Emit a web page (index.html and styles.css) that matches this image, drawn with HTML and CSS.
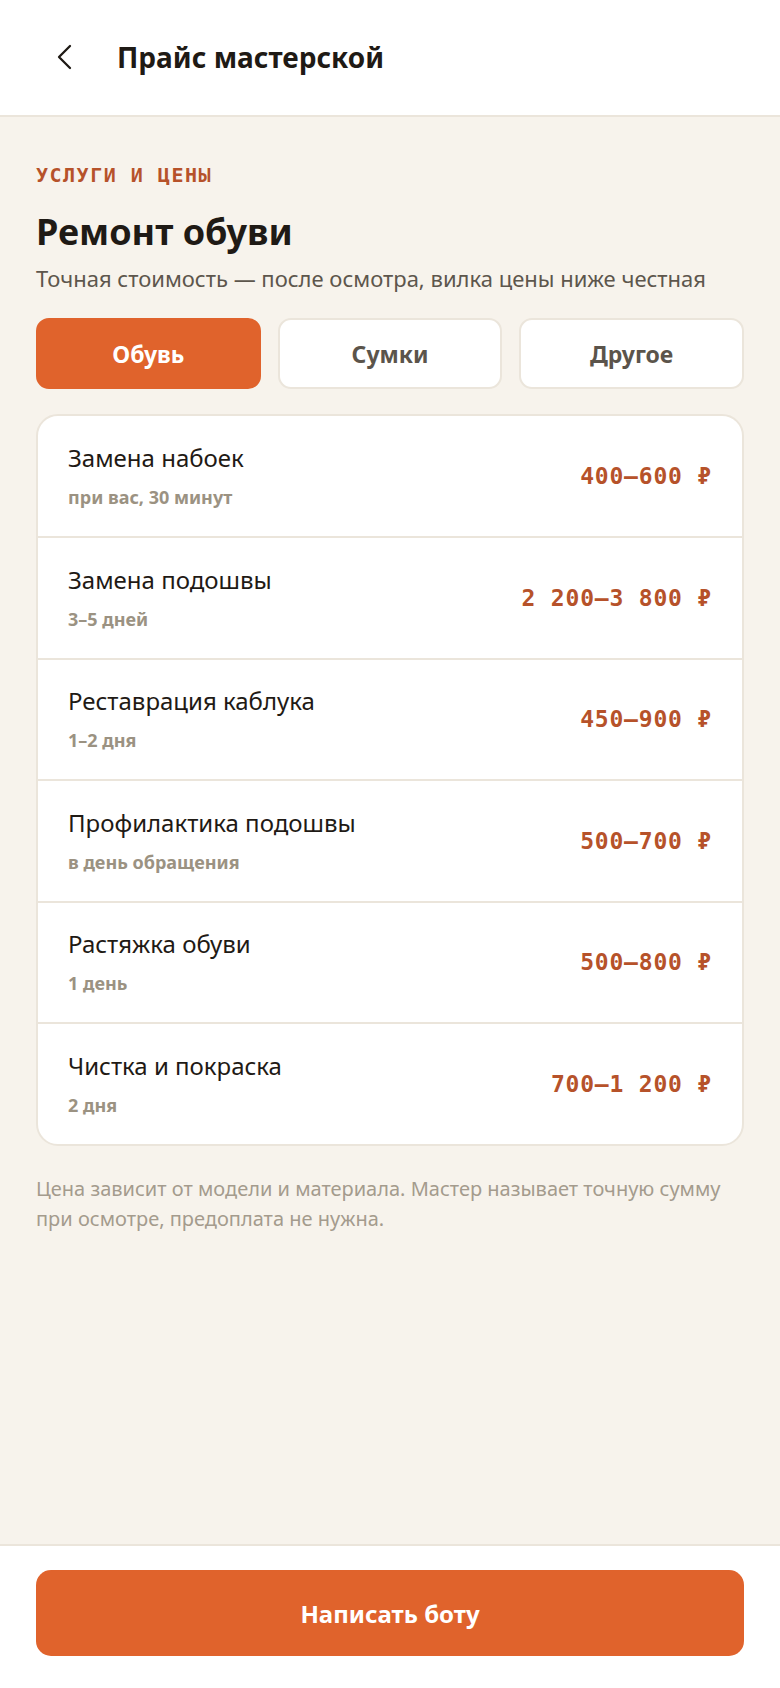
FILE: index.html
```html
<!DOCTYPE html>
<html lang="ru">
<head>
    <meta charset="UTF-8">
    <meta name="viewport" content="width=device-width, initial-scale=1.0">
    <title>Прайс мастерской</title>
    <link rel="stylesheet" href="styles.css">
</head>
<body>
    <header class="topbar">
        <button class="back" aria-label="Назад">
            <svg width="16" height="26" viewBox="0 0 16 26" fill="none">
                <path d="M14 2 L3 13 L14 24" stroke="#1f1a15" stroke-width="2.3" stroke-linecap="round" stroke-linejoin="round"/>
            </svg>
        </button>
        <h1 class="topbar-title">Прайс мастерской</h1>
    </header>

    <main class="content">
        <div class="eyebrow">Услуги и цены</div>
        <h2 class="page-title">Ремонт обуви</h2>
        <p class="lead">Точная стоимость — после осмотра, вилка цены ниже честная</p>

        <div class="tabs">
            <button class="tab active">Обувь</button>
            <button class="tab">Сумки</button>
            <button class="tab">Другое</button>
        </div>

        <div class="price-list">
            <div class="price-row">
                <div class="service">
                    <div class="service-name">Замена набоек</div>
                    <div class="service-time">при вас, 30 минут</div>
                </div>
                <div class="price">400–600 ₽</div>
            </div>
            <div class="price-row">
                <div class="service">
                    <div class="service-name">Замена подошвы</div>
                    <div class="service-time">3–5 дней</div>
                </div>
                <div class="price">2 200–3 800 ₽</div>
            </div>
            <div class="price-row">
                <div class="service">
                    <div class="service-name">Реставрация каблука</div>
                    <div class="service-time">1–2 дня</div>
                </div>
                <div class="price">450–900 ₽</div>
            </div>
            <div class="price-row">
                <div class="service">
                    <div class="service-name">Профилактика подошвы</div>
                    <div class="service-time">в день обращения</div>
                </div>
                <div class="price">500–700 ₽</div>
            </div>
            <div class="price-row">
                <div class="service">
                    <div class="service-name">Растяжка обуви</div>
                    <div class="service-time">1 день</div>
                </div>
                <div class="price">500–800 ₽</div>
            </div>
            <div class="price-row">
                <div class="service">
                    <div class="service-name">Чистка и покраска</div>
                    <div class="service-time">2 дня</div>
                </div>
                <div class="price">700–1 200 ₽</div>
            </div>
        </div>

        <p class="note">Цена зависит от модели и материала. Мастер называет точную сумму при осмотре, предоплата не нужна.</p>
    </main>

    <footer class="bottombar">
        <button class="cta">Написать боту</button>
    </footer>
</body>
</html>
```

FILE: styles.css
```css
* {
    box-sizing: border-box;
}

html, body {
    height: 100%;
}

body {
    margin: 0;
    font-family: 'Noto Sans', 'Open Sans', sans-serif;
    background-color: #f7f3ec;
    color: #1f1a15;
    display: flex;
    flex-direction: column;
    min-height: 100vh;
}

button {
    font-family: inherit;
    cursor: pointer;
}

/* top bar */
.topbar {
    height: 117px;
    background-color: #fff;
    border-bottom: 2px solid #ebe5db;
    display: flex;
    align-items: center;
    padding: 0 0 2px 50px;
}

.back {
    width: 28px;
    height: 40px;
    border: none;
    background: none;
    padding: 0;
    display: flex;
    align-items: center;
    justify-content: center;
    margin-right: 39px;
}

.topbar-title {
    margin: 0;
    font-size: 28px;
    font-weight: 700;
    color: #1f1a15;
}

/* page content */
.content {
    flex: 1;
    padding: 46px 36px 0;
}

.eyebrow {
    font-family: 'DejaVu Sans Mono', monospace;
    font-size: 20px;
    line-height: 24px;
    font-weight: 700;
    letter-spacing: 1.5px;
    text-transform: uppercase;
    color: #b6522a;
}

.page-title {
    margin: 22px 0 0;
    font-size: 36px;
    line-height: 46px;
    font-weight: 700;
    color: #1f1a15;
}

.lead {
    margin: 8px 0 0;
    font-size: 22px;
    line-height: 30px;
    color: #5d564c;
}

.tabs {
    display: grid;
    grid-template-columns: repeat(3, 1fr);
    gap: 17px;
    margin-top: 25px;
}

.tab {
    height: 71px;
    border: 2px solid #ebe5db;
    border-radius: 13px;
    background-color: #fff;
    font-size: 23px;
    font-weight: 700;
    color: #5b544b;
}

.tab.active {
    background-color: #e0632c;
    border-color: #e0632c;
    color: #fff;
}

/* price list */
.price-list {
    margin-top: 25px;
    background-color: #fff;
    border: 2px solid #ebe5db;
    border-radius: 22px;
    overflow: hidden;
}

.price-row {
    display: flex;
    align-items: center;
    justify-content: space-between;
    min-height: 121.5px;
    padding: 0 30px;
    border-top: 2px solid #ebe5db;
}

.price-row:first-child {
    border-top: none;
    min-height: 120px;
}

.service-name {
    font-size: 24px;
    line-height: 30px;
    color: #1f1a15;
}

.service-time {
    margin-top: 12px;
    font-size: 18px;
    line-height: 24px;
    font-weight: 700;
    color: #9b9282;
}

.price {
    font-family: 'DejaVu Sans Mono', monospace;
    font-size: 23px;
    font-weight: 700;
    letter-spacing: 0.8px;
    color: #b6522a;
    white-space: nowrap;
}

.note {
    margin: 28px 0 0;
    font-size: 20px;
    line-height: 30px;
    color: #a49b8d;
}

/* bottom action bar */
.bottombar {
    background-color: #fff;
    border-top: 2px solid #ebe5db;
    padding: 24px 36px 32px;
}

.cta {
    width: 100%;
    height: 86px;
    border: none;
    border-radius: 15px;
    background-color: #e0632c;
    color: #fff;
    font-size: 24px;
    font-weight: 700;
}
```
